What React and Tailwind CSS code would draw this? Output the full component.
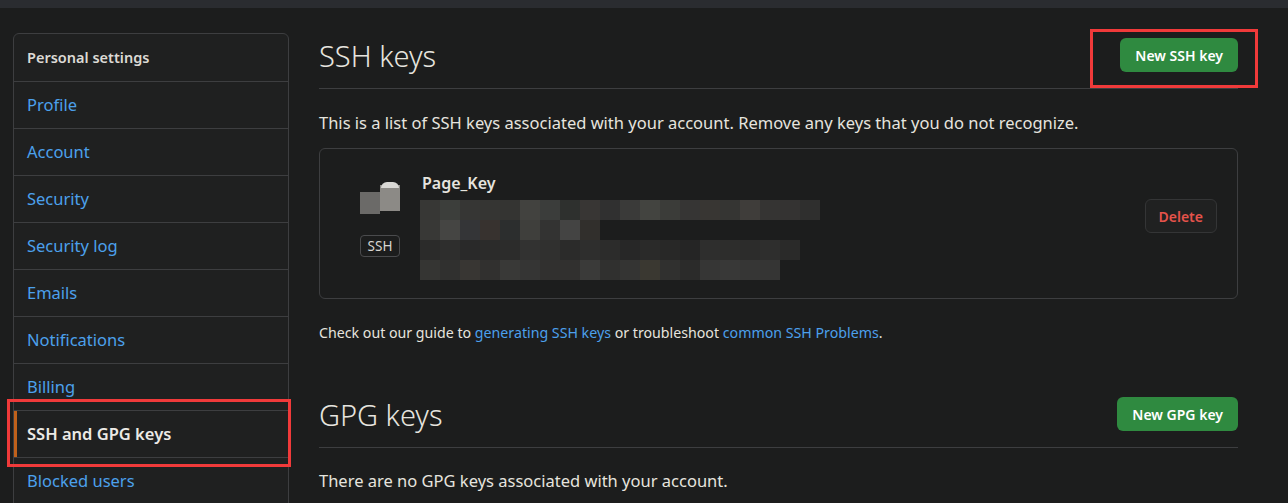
import React from "react";

const NAV = [
  "Profile",
  "Account",
  "Security",
  "Security log",
  "Emails",
  "Notifications",
  "Billing",
  "SSH and GPG keys",
  "Blocked users",
];

// pixelated (blurred) key fingerprint
const MOSAIC = [
  ["#373735", "#3c3e3b", "#363634", "#353533", "#343432", "#42423f", "#3b3d3b", "#2e302e", "#383634", "#303030", "#3a3a39", "#434440", "#3b3c39", "#363534", "#383633", "#353533", "#3f3d3a", "#353433", "#343332", "#2f2f2e"],
  ["#383836", "#454543", "#343537", "#37322f", "#2c2e2e", "#3f3f3c", "#333332", "#444443", "#312f2c", "", "", "", "", "", "", "", "", "", "", ""],
  ["#2b2b2a", "#2e2e2d", "#292929", "#2b2b2a", "#2c2c2b", "#323231", "#30302f", "#2b2b2a", "#2e2e2d", "#2c2c2b", "#272727", "#2a2a29", "#282827", "#252525", "#2e2e2d", "#2d2d2c", "#2c2c2b", "#2e2e2d", "#2a2a29", ""],
  ["#353533", "#30302f", "#383633", "#31302f", "#393937", "#353534", "#31302f", "#31302f", "#3a3a39", "#30302f", "#343433", "#3a3831", "#30302f", "#2b2b2a", "#363635", "#383837", "#363635", "#353534", "", ""],
];

function Mosaic() {
  return (
    <div className="flex flex-col">
      {MOSAIC.map((row, i) => (
        <div key={i} className="flex h-5">
          {row.map((c, j) => (
            <div key={j} className="w-5 h-5" style={{ background: c || "transparent" }} />
          ))}
        </div>
      ))}
    </div>
  );
}

export default function App() {
  return (
    <div
      className="w-[1288px] h-[503px] overflow-hidden bg-[#1c1d1d] text-[#e6e4df]"
      style={{ fontFamily: '"Noto Sans", "Open Sans", sans-serif' }}
    >
      <div className="h-2 bg-[#2a2c30]" />
      <div className="flex pt-[25px]">
        {/* sidebar */}
        <div className="ml-[13px] w-[276px] shrink-0">
          <div className="relative border border-[#3d3e40] rounded-t-md bg-[#1f2020]">
            <div className="h-[47px] flex items-center px-[13px] text-[14.5px] font-semibold text-[#dcdad5]">
              Personal settings
            </div>
            {NAV.map((item) => {
              const active = item === "SSH and GPG keys";
              return (
                <div
                  key={item}
                  className={`relative h-[47px] border-t border-[#3d3e40] flex items-center px-[13px] text-[16.5px] ${
                    active ? "font-semibold text-[#eceae6]" : "text-[#4ca0ec]"
                  }`}
                >
                  {active && <div className="absolute left-0 top-0 bottom-0 w-[3px] bg-[#c0611b]" />}
                  {item}
                </div>
              );
            })}
            <div className="absolute left-[-7px] top-[365px] w-[284px] h-[68px] border-[3px] border-[#f03a3a]" />
          </div>
        </div>

        {/* main */}
        <div className="ml-[30px] w-[919px] shrink-0">
          <div className="relative flex items-start justify-between h-[56px] pt-[5px] border-b border-[#3d3e40]">
            <h2 className="mt-[3px] text-[29px] font-light leading-none">SSH keys</h2>
            <button className="h-[34px] px-[15px] rounded-md bg-[#2f8a40] text-white text-[14px] font-semibold">
              New SSH key
            </button>
            <div className="absolute right-[-20px] top-[-4px] w-[168px] h-[59px] border-[3px] border-[#f03a3a]" />
          </div>

          <p className="mt-[22px] text-[16.5px] leading-6">
            This is a list of SSH keys associated with your account. Remove any keys that you do not recognize.
          </p>

          <div className="mt-[13px] h-[151px] border border-[#3d3e40] rounded-md flex items-start pt-[24px] pl-[40px] pr-[20px]">
            <div className="flex flex-col items-center w-[40px]">
              <div className="relative mt-[9px] w-[40px] h-[40px]">
                <div className="absolute left-0 top-[10px] w-[20px] h-[22px] bg-[#6b6a68]" />
                <div className="absolute left-[20px] top-[3px] w-[20px] h-[26px] bg-[#8c8a86]" />
                <div className="absolute left-[21px] top-0 w-[18px] h-[6px] rounded-t-full bg-[#d9d8d5]" />
              </div>
              <span className="mt-[13px] w-[40px] h-[22px] flex items-center justify-center border border-[#4a4b4d] rounded text-[13.5px] text-[#d8d6d1]">
                SSH
              </span>
            </div>
            <div className="ml-[20px] flex-1">
              <div className="pl-[2px] text-[16px] font-semibold leading-5">Page_Key</div>
              <div className="mt-[7px]">
                <Mosaic />
              </div>
            </div>
            <button className="mt-[26px] h-[34px] px-[13px] rounded-md border border-[#343536] bg-[#202121] text-[#e5534b] text-[14px] font-semibold">
              Delete
            </button>
          </div>

          <p className="mt-[23px] text-[14.2px]">
            Check out our guide to <span className="text-[#4ca0ec]">generating SSH keys</span> or troubleshoot{" "}
            <span className="text-[#4ca0ec]">common SSH Problems</span>.
          </p>

          <div className="mt-[49px] flex items-start justify-between h-[56px] pt-[5px] border-b border-[#3d3e40]">
            <h2 className="mt-[3px] text-[29px] font-light leading-none">GPG keys</h2>
            <button className="h-[34px] px-[15px] rounded-md bg-[#2f8a40] text-white text-[14px] font-semibold">
              New GPG key
            </button>
          </div>

          <p className="mt-[21px] text-[16.5px]">There are no GPG keys associated with your account.</p>
        </div>
      </div>
    </div>
  );
}
